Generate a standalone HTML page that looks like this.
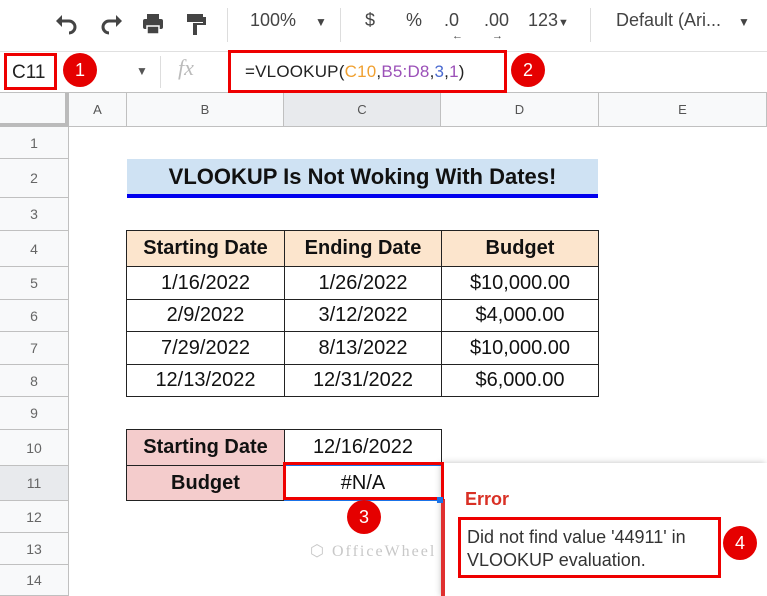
<!DOCTYPE html>
<html><head><meta charset="utf-8"><style>
*{margin:0;padding:0;box-sizing:border-box}
body{width:767px;height:596px;overflow:hidden;background:#fff;font-family:"Liberation Sans",Arial,sans-serif;position:relative}
.a{position:absolute}
.t{position:absolute;display:flex;align-items:center;justify-content:center;white-space:nowrap}
.rh{position:absolute;left:0;width:69px;background:#f8f9fa;border-bottom:1px solid #c0c0c0;border-right:1px solid #c0c0c0;color:#666;font-size:14px;display:flex;align-items:center;justify-content:center}
.ch{position:absolute;top:93px;height:34px;background:#f8f9fa;border-right:1px solid #c0c0c0;border-bottom:1px solid #c0c0c0;color:#555;font-size:13px;display:flex;align-items:center;justify-content:center}
.c{position:absolute;border:1px solid #222;display:flex;align-items:center;justify-content:center;font-size:20px;color:#111}
.b{font-weight:bold}
.circ{position:absolute;width:34px;height:34px;border-radius:50%;background:#e50000;color:#fff;font-size:18px;display:flex;align-items:center;justify-content:center}
.tb{position:absolute;top:10px;font-size:18px;color:#444}
.sep{position:absolute;top:8px;width:1px;height:34px;background:#ddd}
</style></head><body>
<svg class="a" style="left:54px;top:12px" width="160" height="24" viewBox="0 0 160 24">
<path d="M4 9h11a6 6 0 0 1 0 12" stroke="#444" stroke-width="3" fill="none"/><path d="M2 9l6-6v12z" fill="#444"/>
<path d="M66 9H55a6 6 0 0 0 0 12" stroke="#444" stroke-width="3" fill="none"/><path d="M68 9l-6-6v12z" fill="#444"/>
<rect x="89" y="7" width="20" height="10" rx="2" fill="#444"/><rect x="93" y="2" width="12" height="5" fill="#444"/><rect x="93" y="14" width="12" height="8" fill="#444" stroke="#fff" stroke-width="1.5"/>
<rect x="133" y="2" width="16" height="8" fill="#444"/><rect x="149" y="5" width="3" height="8" fill="#444"/><rect x="139" y="11" width="12" height="2" fill="#444"/><rect x="139" y="12" width="4" height="11" fill="#444"/>
</svg>
<div class="sep" style="left:227px"></div>
<div class="tb" style="left:250px">100%</div>
<div class="tb" style="left:315px;font-size:12px;top:15px">▼</div>
<div class="sep" style="left:340px"></div>
<div class="tb" style="left:365px">$</div>
<div class="tb" style="left:406px">%</div>
<div class="tb" style="left:444px">.0</div><div class="a" style="left:452px;top:30px;font-size:11px;color:#444">←</div>
<div class="tb" style="left:484px">.00</div><div class="a" style="left:492px;top:30px;font-size:11px;color:#444">→</div>
<div class="tb" style="left:528px">123<span style="font-size:11px">▼</span></div>
<div class="sep" style="left:590px"></div>
<div class="tb" style="left:616px">Default (Ari...</div>
<div class="tb" style="left:738px;font-size:12px;top:15px">▼</div>
<div class="a" style="left:0;top:51px;width:767px;height:1px;background:#e0e0e0"></div>
<div class="a" style="left:0;top:92px;width:767px;height:1px;background:#c0c0c0"></div>
<div class="a" style="left:4px;top:53px;width:53px;height:37px;border:3px solid #e00;font-size:19px;color:#222;padding:6px 0 0 5px">C11</div>
<div class="circ" style="left:63px;top:53px">1</div>
<div class="a" style="left:136px;top:64px;font-size:12px;color:#555">▼</div>
<div class="a" style="left:160px;top:56px;width:1px;height:32px;background:#ddd"></div>
<div class="a" style="left:178px;top:55px;font-family:'Liberation Serif',serif;font-style:italic;font-size:22px;color:#bbb">fx</div>
<div class="a" style="left:228px;top:50px;width:279px;height:43px;border:3px solid #e00;font-size:17px;padding:9px 0 0 14px;color:#222;white-space:nowrap;letter-spacing:0.2px">=VLOOKUP(<span style="color:#f0a030">C10</span>,<span style="color:#9b50b8">B5:D8</span>,<span style="color:#4a6ad0">3</span>,<span style="color:#9b50b8">1</span>)</div>
<div class="circ" style="left:511px;top:53px">2</div>
<div class="a" style="left:0;top:93px;width:69px;height:34px;background:#f8f9fa;border-right:4px solid #bbb;border-bottom:4px solid #bbb"></div>
<div class="ch" style="left:69px;width:58px">A</div>
<div class="ch" style="left:127px;width:157px">B</div>
<div class="ch" style="left:284px;width:157px;background:#e8eaed">C</div>
<div class="ch" style="left:441px;width:158px">D</div>
<div class="ch" style="left:599px;width:168px">E</div>
<div class="rh" style="top:127px;height:32px">1</div>
<div class="rh" style="top:159px;height:39px">2</div>
<div class="rh" style="top:198px;height:33px">3</div>
<div class="rh" style="top:231px;height:36px">4</div>
<div class="rh" style="top:267px;height:33px">5</div>
<div class="rh" style="top:300px;height:32px">6</div>
<div class="rh" style="top:332px;height:33px">7</div>
<div class="rh" style="top:365px;height:32px">8</div>
<div class="rh" style="top:397px;height:33px">9</div>
<div class="rh" style="top:430px;height:36px">10</div>
<div class="rh" style="top:466px;height:35px;background:#e8eaed">11</div>
<div class="rh" style="top:501px;height:32px">12</div>
<div class="rh" style="top:533px;height:32px">13</div>
<div class="rh" style="top:565px;height:31px">14</div>
<div class="t b" style="left:127px;top:159px;width:471px;height:35px;background:#cfe2f3;font-size:22px;color:#111">VLOOKUP Is Not Woking With Dates!</div>
<div class="a" style="left:127px;top:194px;width:471px;height:4px;background:#0000ee"></div>
<div class="c b" style="left:126px;top:230px;width:159px;height:37px;background:#fce5cd">Starting Date</div>
<div class="c b" style="left:284px;top:230px;width:158px;height:37px;background:#fce5cd">Ending Date</div>
<div class="c b" style="left:441px;top:230px;width:158px;height:37px;background:#fce5cd">Budget</div>
<div class="c" style="left:126px;top:266px;width:159px;height:34px">1/16/2022</div>
<div class="c" style="left:284px;top:266px;width:158px;height:34px">1/26/2022</div>
<div class="c" style="left:441px;top:266px;width:158px;height:34px">$10,000.00</div>
<div class="c" style="left:126px;top:299px;width:159px;height:33px">2/9/2022</div>
<div class="c" style="left:284px;top:299px;width:158px;height:33px">3/12/2022</div>
<div class="c" style="left:441px;top:299px;width:158px;height:33px">$4,000.00</div>
<div class="c" style="left:126px;top:331px;width:159px;height:34px">7/29/2022</div>
<div class="c" style="left:284px;top:331px;width:158px;height:34px">8/13/2022</div>
<div class="c" style="left:441px;top:331px;width:158px;height:34px">$10,000.00</div>
<div class="c" style="left:126px;top:364px;width:159px;height:33px">12/13/2022</div>
<div class="c" style="left:284px;top:364px;width:158px;height:33px">12/31/2022</div>
<div class="c" style="left:441px;top:364px;width:158px;height:33px">$6,000.00</div>
<div class="c b" style="left:126px;top:429px;width:159px;height:37px;background:#f4cccc">Starting Date</div>
<div class="c" style="left:284px;top:429px;width:158px;height:37px">12/16/2022</div>
<div class="c b" style="left:126px;top:465px;width:159px;height:36px;background:#f4cccc">Budget</div>
<div class="c" style="left:284px;top:465px;width:158px;height:36px;border-color:#1a73e8">#N/A</div>
<div class="a" style="left:443px;top:463px;width:324px;height:133px;background:#fff;box-shadow:-2px 0 6px rgba(0,0,0,.25)"></div>
<div class="a" style="left:441px;top:499px;width:4px;height:97px;background:#e03030"></div>
<div class="a" style="left:283px;top:462px;width:161px;height:38px;border:3px solid #e00"></div>
<div class="a" style="left:437px;top:497px;width:6px;height:6px;background:#1a73e8"></div>
<div class="circ" style="left:347px;top:500px">3</div>
<div class="a b" style="left:465px;top:489px;color:#d93025;font-size:18px">Error</div>
<div class="a" style="left:458px;top:517px;width:263px;height:61px;border:3px solid #e00;font-size:18px;color:#333;padding:6px 0 0 6px;line-height:23px">Did not find value '44911' in<br>VLOOKUP evaluation.</div>
<div class="circ" style="left:723px;top:526px">4</div>
<div class="a" style="left:310px;top:541px;font-family:'Liberation Serif',serif;font-size:16px;letter-spacing:2px;color:#c8c8c8">⬡ OfficeWheel</div>
</body></html>
